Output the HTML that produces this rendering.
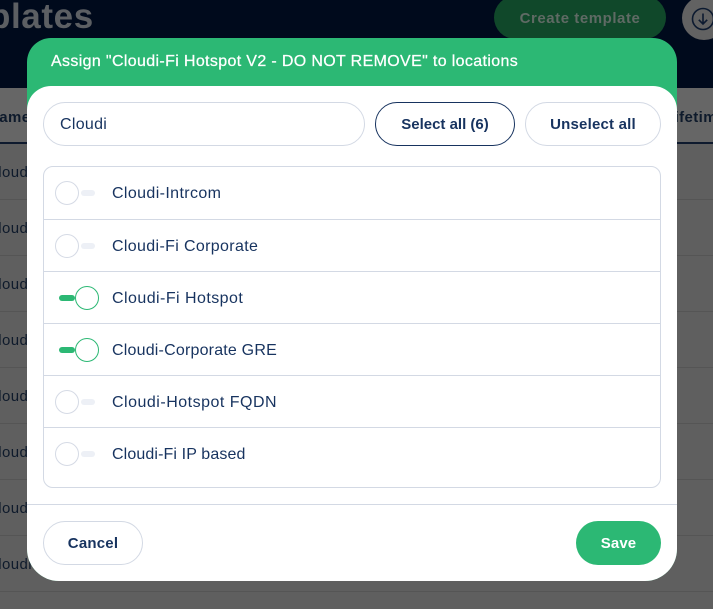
<!DOCTYPE html>
<html><head><meta charset="utf-8">
<style>
html,body{margin:0;padding:0;width:713px;height:609px;overflow:hidden;background:#5f5f5f;font-family:"Liberation Sans",sans-serif;}
.a{position:absolute;box-sizing:border-box;white-space:nowrap;}
.top{left:0;top:0;width:713px;height:88px;background:#000a1c;}
.line{left:0;width:713px;height:1px;background:#555;}
.bg{color:#0e1a2b;font-size:15px;left:-13px;letter-spacing:.4px;}
.modal{left:27px;top:38px;width:650px;height:543px;background:#2cb874;border-radius:24px 24px 32px 32px;}
.body{left:27px;top:86px;width:650px;height:495px;background:#fff;border-radius:24px 24px 32px 32px;}
.btn{border:1px solid #d3d9e4;border-radius:22px;height:44px;line-height:44px;text-align:center;color:#17335f;font-size:15px;font-weight:bold;letter-spacing:.2px;background:#fff;}
.row{left:44px;width:616px;height:1px;background:#d3d9e4;}
.lb{left:112px;color:#17335f;font-size:16px;letter-spacing:.45px;line-height:18px;}
.c{width:24px;height:24px;border-radius:50%;border:1.4px solid #d5dae5;background:#fff;}
.t{width:14px;height:6px;border-radius:3px;background:#edf0f6;}
.con{border-color:#2cb874;}
.ton{width:16px;background:#2cb874;}
</style></head><body>
<div class="a top"></div>
<div class="a" style="left:-11px;top:-4px;font-size:35px;font-weight:bold;color:#5c5f63;letter-spacing:.6px;line-height:42px;">plates</div>
<div class="a" style="left:494px;top:-4px;width:172px;height:43px;border-radius:22px;background:#10482a;color:#5f6a64;font-size:15px;font-weight:bold;text-align:center;line-height:45px;letter-spacing:.55px;">Create template</div>
<div class="a" style="left:682px;top:-4px;width:44px;height:44px;border-radius:50%;background:#626262;"></div>
<svg class="a" style="left:691px;top:6px;" width="26" height="26" viewBox="0 0 26 26" fill="none" stroke="#0c1a30" stroke-width="1.6"><circle cx="12" cy="13" r="10.5"/><path d="M12 7.5V18M7.8 13.8L12 18l4.2-4.2"/></svg>
<div class="a" style="left:0;top:88px;width:713px;height:56px;background:#666;"></div>
<div class="a" style="left:0;top:142px;width:713px;height:2px;background:#0e1a2e;"></div>
<div class="a bg" style="left:-12px;top:109px;font-weight:bold;">Name</div>
<div class="a bg" style="left:665px;top:109px;font-weight:bold;">Lifetime</div>
<div class="a line" style="top:199px"></div><div class="a line" style="top:255px"></div><div class="a line" style="top:311px"></div><div class="a line" style="top:367px"></div><div class="a line" style="top:423px"></div><div class="a line" style="top:479px"></div><div class="a line" style="top:535px"></div><div class="a line" style="top:591px"></div>
<div class="a bg" style="top:164px">Cloudi</div><div class="a bg" style="top:220px">Cloudi</div><div class="a bg" style="top:276px">Cloudi</div><div class="a bg" style="top:332px">Cloudi</div><div class="a bg" style="top:388px">Cloudi</div><div class="a bg" style="top:444px">Cloudi</div><div class="a bg" style="top:500px">Cloudi</div><div class="a bg" style="top:556px">Cloudi</div>
<div class="a modal"></div>
<div class="a" style="left:51px;top:53px;color:#fff;font-size:16px;font-weight:normal;letter-spacing:.35px;line-height:18px;-webkit-text-stroke:.25px #fff;">Assign "Cloudi-Fi Hotspot V2 - DO NOT REMOVE" to locations</div>
<div class="a body"></div>
<div class="a btn" style="left:43px;top:102px;width:322px;text-align:left;padding-left:16px;font-weight:normal;font-size:16px;letter-spacing:.3px;">Cloudi</div>
<div class="a btn" style="left:375px;top:102px;width:140px;border-color:#17335f;letter-spacing:0;">Select all (6)</div>
<div class="a btn" style="left:525px;top:102px;width:136px;">Unselect all</div>
<div class="a" style="left:43px;top:166px;width:618px;height:322px;border:1px solid #d3d9e4;border-radius:10px;"></div>
<div class="a row" style="top:219px"></div><div class="a row" style="top:271px"></div><div class="a row" style="top:323px"></div><div class="a row" style="top:375px"></div><div class="a row" style="top:427px"></div>
<div class="a c" style="left:55px;top:181px"></div><div class="a t" style="left:81px;top:190px"></div><div class="a lb" style="top:185px;letter-spacing:.38px">Cloudi-Intrcom</div>
<div class="a c" style="left:55px;top:234px"></div><div class="a t" style="left:81px;top:243px"></div><div class="a lb" style="top:238px;letter-spacing:.35px">Cloudi-Fi Corporate</div>
<div class="a t ton" style="left:59px;top:295px"></div><div class="a c con" style="left:75px;top:286px"></div><div class="a lb" style="top:290px">Cloudi-Fi Hotspot</div>
<div class="a t ton" style="left:59px;top:347px"></div><div class="a c con" style="left:75px;top:338px"></div><div class="a lb" style="top:342px;letter-spacing:.2px">Cloudi-Corporate GRE</div>
<div class="a c" style="left:55px;top:390px"></div><div class="a t" style="left:81px;top:399px"></div><div class="a lb" style="top:394px;letter-spacing:.5px">Cloudi-Hotspot FQDN</div>
<div class="a c" style="left:55px;top:442px"></div><div class="a t" style="left:81px;top:451px"></div><div class="a lb" style="top:446px;letter-spacing:.12px">Cloudi-Fi IP based</div>
<div class="a" style="left:27px;top:504px;width:650px;height:1px;background:#d3d9e4;"></div>
<div class="a btn" style="left:43px;top:521px;width:100px;">Cancel</div>
<div class="a btn" style="left:576px;top:521px;width:85px;background:#2cb874;border:0;color:#fff;line-height:46px;letter-spacing:.1px;">Save</div>
</body></html>
